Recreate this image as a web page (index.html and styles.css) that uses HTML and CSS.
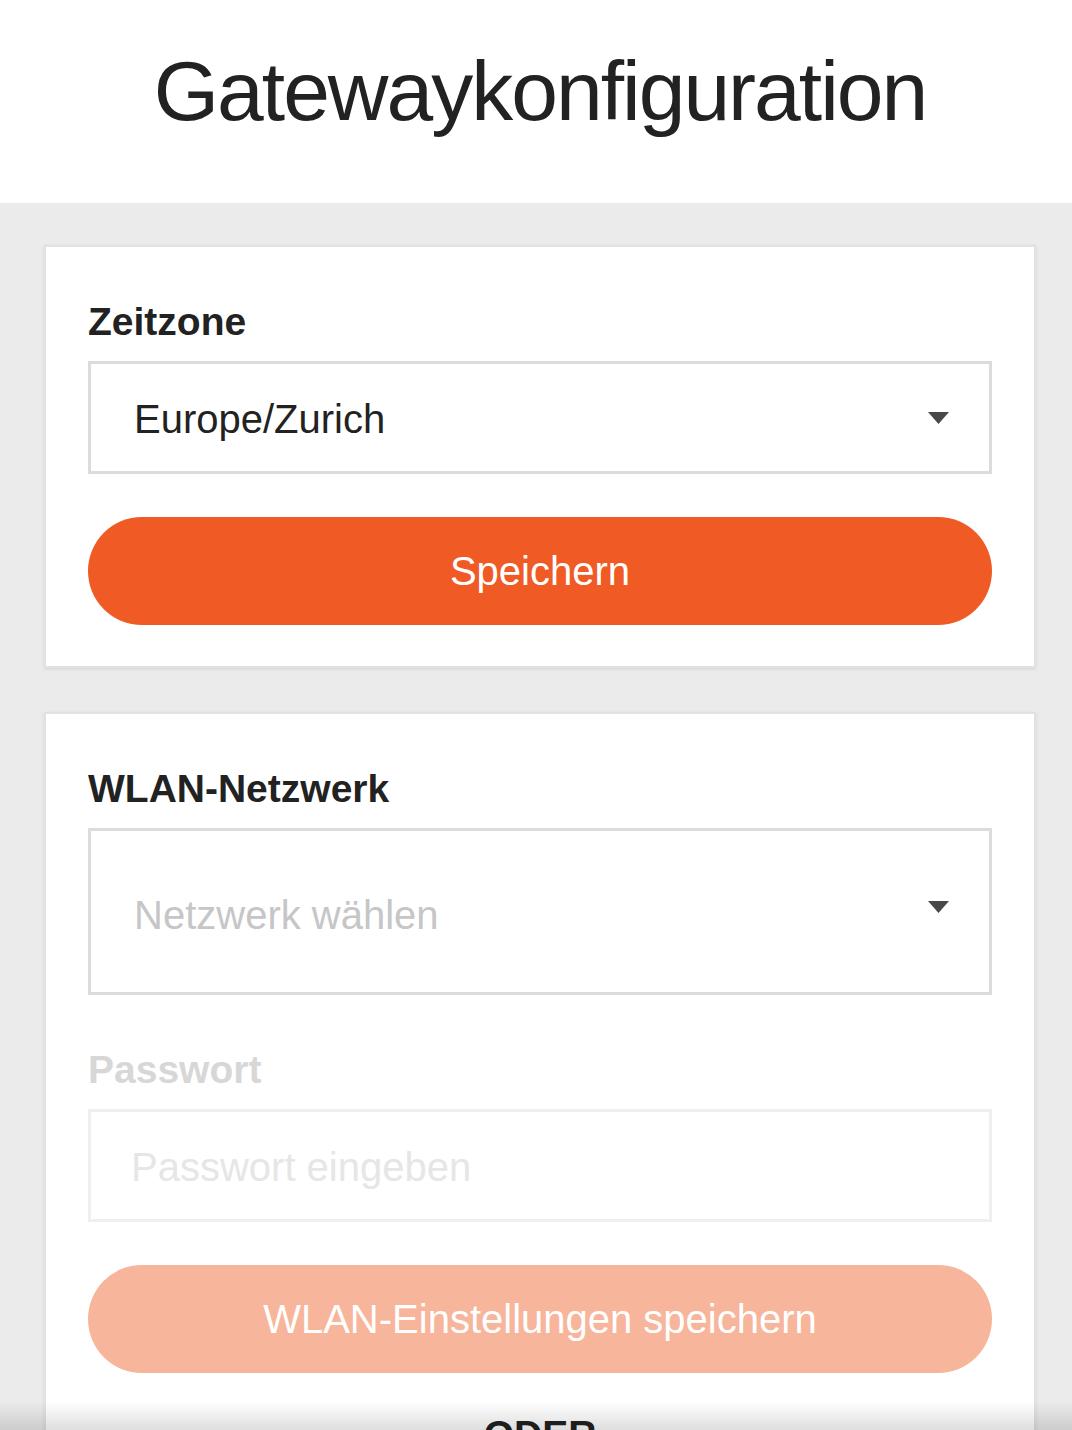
FILE: index.html
```html
<!DOCTYPE html>
<html lang="de">
<head>
<meta charset="utf-8">
<title>Gatewaykonfiguration</title>
<link rel="stylesheet" href="styles.css">
</head>
<body>
<header class="page-header">
  <h1 class="page-title">Gatewaykonfiguration</h1>
</header>
<main class="content">
  <section class="card">
    <label class="field-label">Zeitzone</label>
    <div class="select">
      <span class="select-value">Europe/Zurich</span>
      <svg class="select-arrow" width="21" height="12" viewBox="0 0 21 12"><path d="M0 0H21L10.5 12Z" fill="#484848"/></svg>
    </div>
    <button class="btn btn-primary">Speichern</button>
  </section>
  <section class="card card-second">
    <label class="field-label">WLAN-Netzwerk</label>
    <div class="select select-tall">
      <span class="select-value select-placeholder">Netzwerk wählen</span>
      <svg class="select-arrow select-arrow-up" width="21" height="12" viewBox="0 0 21 12"><path d="M0 0H21L10.5 12Z" fill="#484848"/></svg>
    </div>
    <label class="field-label field-label-disabled label-spaced">Passwort</label>
    <input class="text-input" type="password" placeholder="Passwort eingeben" disabled>
    <button class="btn btn-disabled">WLAN-Einstellungen speichern</button>
    <div class="divider-text">ODER</div>
  </section>
</main>
<div class="bottom-shade"></div>
</body>
</html>
```

FILE: styles.css
```css
* { box-sizing: border-box; }

html, body {
  margin: 0;
  padding: 0;
}

body {
  font-family: "Liberation Sans", Arial, sans-serif;
  color: #222;
  background: #ebebeb;
}

.page-header {
  background: #fff;
  height: 203px;
  padding-top: 49px;
  display: flex;
  justify-content: center;
  align-items: flex-start;
}

.page-title {
  margin: 0;
  font-size: 84px;
  line-height: 84px;
  font-weight: 400;
  letter-spacing: -2px;
  color: #222;
  padding-left: 8px;
}

.content {
  background: #ebebeb;
  padding: 42px 36px 0 44px;
}

.card {
  background: #fff;
  border: 2px solid #e2e2e2;
  box-shadow: 0 1px 3px rgba(0, 0, 0, 0.10);
  padding: 55px 42px 41px;
  display: flex;
  flex-direction: column;
}

.card-second {
  margin-top: 44px;
  padding-bottom: 80px;
}

.field-label {
  display: block;
  font-size: 39px;
  line-height: 39px;
  font-weight: 700;
  color: #222;
  margin-bottom: 20px;
}

.field-label-disabled {
  color: #d7d7d7;
}

.label-spaced {
  margin-top: 55px;
}

.select {
  height: 113px;
  border: 3px solid #dcdcdc;
  display: flex;
  align-items: center;
  justify-content: space-between;
  padding: 0 40px 0 43px;
  background: #fff;
}

.select-tall {
  height: 167px;
}

.select-value {
  font-size: 40px;
  line-height: 40px;
  color: #222;
  padding-top: 3px;
}

.select-placeholder {
  color: #c6c6c6;
  padding-top: 6px;
}

.select-arrow {
  display: block;
  flex: none;
}

.select-arrow-up {
  margin-bottom: 10px;
}

.text-input {
  height: 113px;
  border: 3px solid #efefef;
  background: #fff;
  padding: 4px 0 0 40px;
  font-family: "Liberation Sans", Arial, sans-serif;
  font-size: 40px;
  color: #222;
  outline: none;
  width: 100%;
}

.text-input::placeholder {
  color: #e6e6e6;
  opacity: 1;
}

.btn {
  margin-top: 43px;
  height: 108px;
  border: none;
  border-radius: 54px;
  font-family: "Liberation Sans", Arial, sans-serif;
  font-size: 40px;
  color: #fff;
  width: 100%;
  padding: 0;
}

.btn-primary {
  background: #f05a24;
}

.btn-disabled {
  background: #f7b59b;
}

.divider-text {
  margin-top: 42px;
  text-align: center;
  font-size: 39px;
  line-height: 39px;
  font-weight: 700;
  color: #222;
}

.bottom-shade {
  position: fixed;
  left: 0;
  right: 0;
  bottom: 0;
  height: 28px;
  background: linear-gradient(to bottom, rgba(0, 0, 0, 0), rgba(0, 0, 0, 0.13));
  pointer-events: none;
}
```
